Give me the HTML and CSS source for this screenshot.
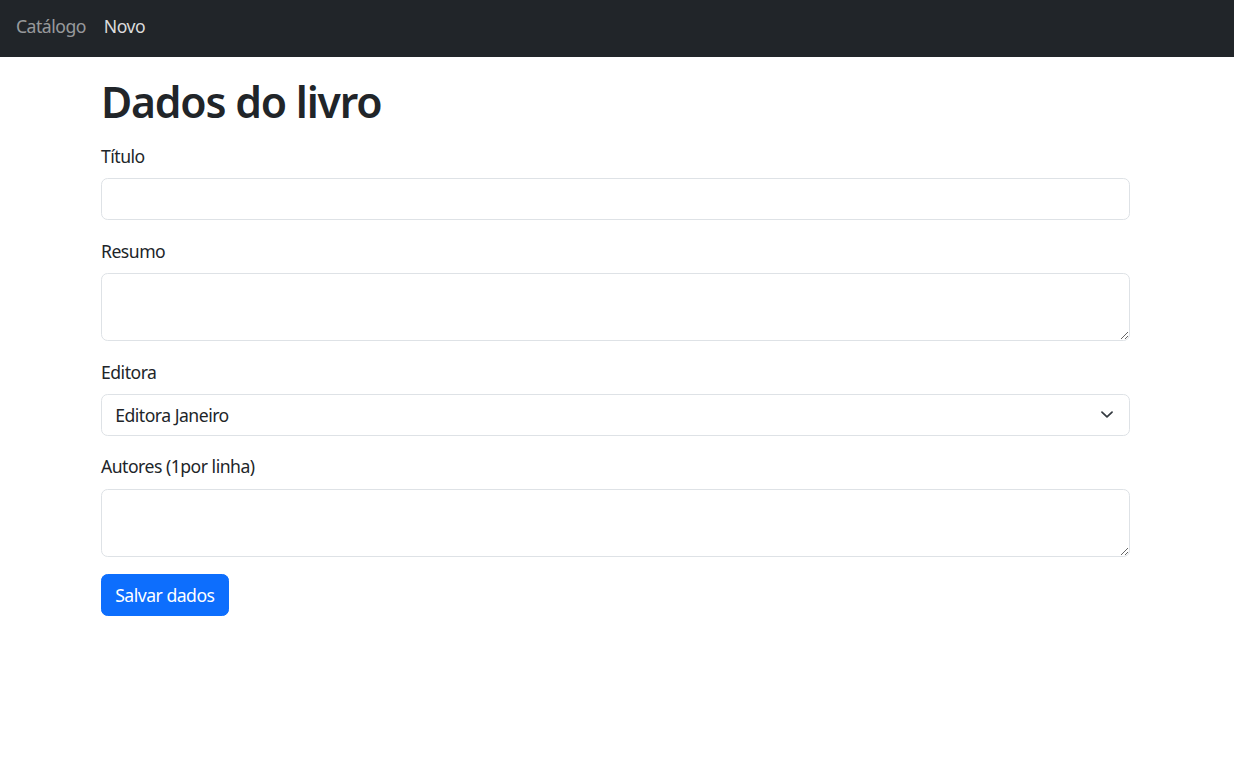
FILE: index.html
```html
<!DOCTYPE html>
<html lang="pt-BR">
<head>
<meta charset="utf-8">
<title>Dados do livro</title>
<link rel="stylesheet" href="styles.css">
</head>
<body>
<nav class="navbar">
  <a class="nav-link" href="#">Catálogo</a>
  <a class="nav-link active" href="#">Novo</a>
</nav>
<main class="container">
  <h1 class="title">Dados do livro</h1>
  <form class="form">
    <div class="field">
      <label class="label" for="titulo">Título</label>
      <input class="control" id="titulo" type="text">
    </div>
    <div class="field">
      <label class="label" for="resumo">Resumo</label>
      <textarea class="control area" id="resumo" rows="2"></textarea>
    </div>
    <div class="field">
      <label class="label" for="editora">Editora</label>
      <select class="control select" id="editora">
        <option>Editora Janeiro</option>
      </select>
    </div>
    <div class="field">
      <label class="label" for="autores">Autores (1por linha)</label>
      <textarea class="control area" id="autores" rows="2"></textarea>
    </div>
    <button class="btn" type="button">Salvar dados</button>
  </form>
</main>
</body>
</html>
```
FILE: styles.css
```css
* { box-sizing: border-box; }
html, body { margin: 0; padding: 0; }
body {
  font-family: "Noto Sans", "Open Sans", sans-serif;
  font-size: 17.6px;
  line-height: 1.5;
  letter-spacing: -0.5px;
  color: #212529;
  background: #fff;
}
.navbar {
  height: 57px;
  background: #212529;
  display: flex;
  align-items: center;
  padding: 0 16px 6px;
  gap: 18px;
}
.nav-link {
  text-decoration: none;
  color: rgba(255, 255, 255, 0.55);
  font-size: 17.6px;
  line-height: 26px;
}
.nav-link.active { color: rgba(255, 255, 255, 0.85); }
.container {
  width: 1029px;
  margin: 0 0 0 101px;
}
.title {
  font-size: 42.7px;
  font-weight: 600;
  letter-spacing: -1.2px;
  line-height: 51px;
  margin: 19px 0 16px;
}
.form { display: flex; flex-direction: column; align-items: flex-start; }
.field { width: 100%; margin-bottom: 17.6px; }
.label {
  display: block;
  line-height: 26.4px;
  margin-bottom: 8.8px;
}
.control {
  display: block;
  width: 100%;
  height: 42px;
  padding: 6.6px 13.2px;
  font: inherit;
  letter-spacing: inherit;
  color: #212529;
  background: #fff;
  border: 1px solid #dee2e6;
  border-radius: 6.6px;
  outline: none;
}
.area { height: 68px; resize: vertical; }
.select {
  appearance: none;
  -webkit-appearance: none;
  padding-right: 40px;
  background-image: url("data:image/svg+xml,%3csvg xmlns='http://www.w3.org/2000/svg' viewBox='0 0 16 16'%3e%3cpath fill='none' stroke='%23343a40' stroke-linecap='round' stroke-linejoin='round' stroke-width='2' d='m2 5 6 6 6-6'/%3e%3c/svg%3e");
  background-repeat: no-repeat;
  background-position: right 13.2px center;
  background-size: 17.6px 13.2px;
}
.btn {
  font: inherit;
  letter-spacing: inherit;
  color: #fff;
  background: #0d6efd;
  border: 1px solid #0d6efd;
  border-radius: 6.6px;
  height: 42px;
  padding: 0 13.2px;
  cursor: pointer;
}
```
